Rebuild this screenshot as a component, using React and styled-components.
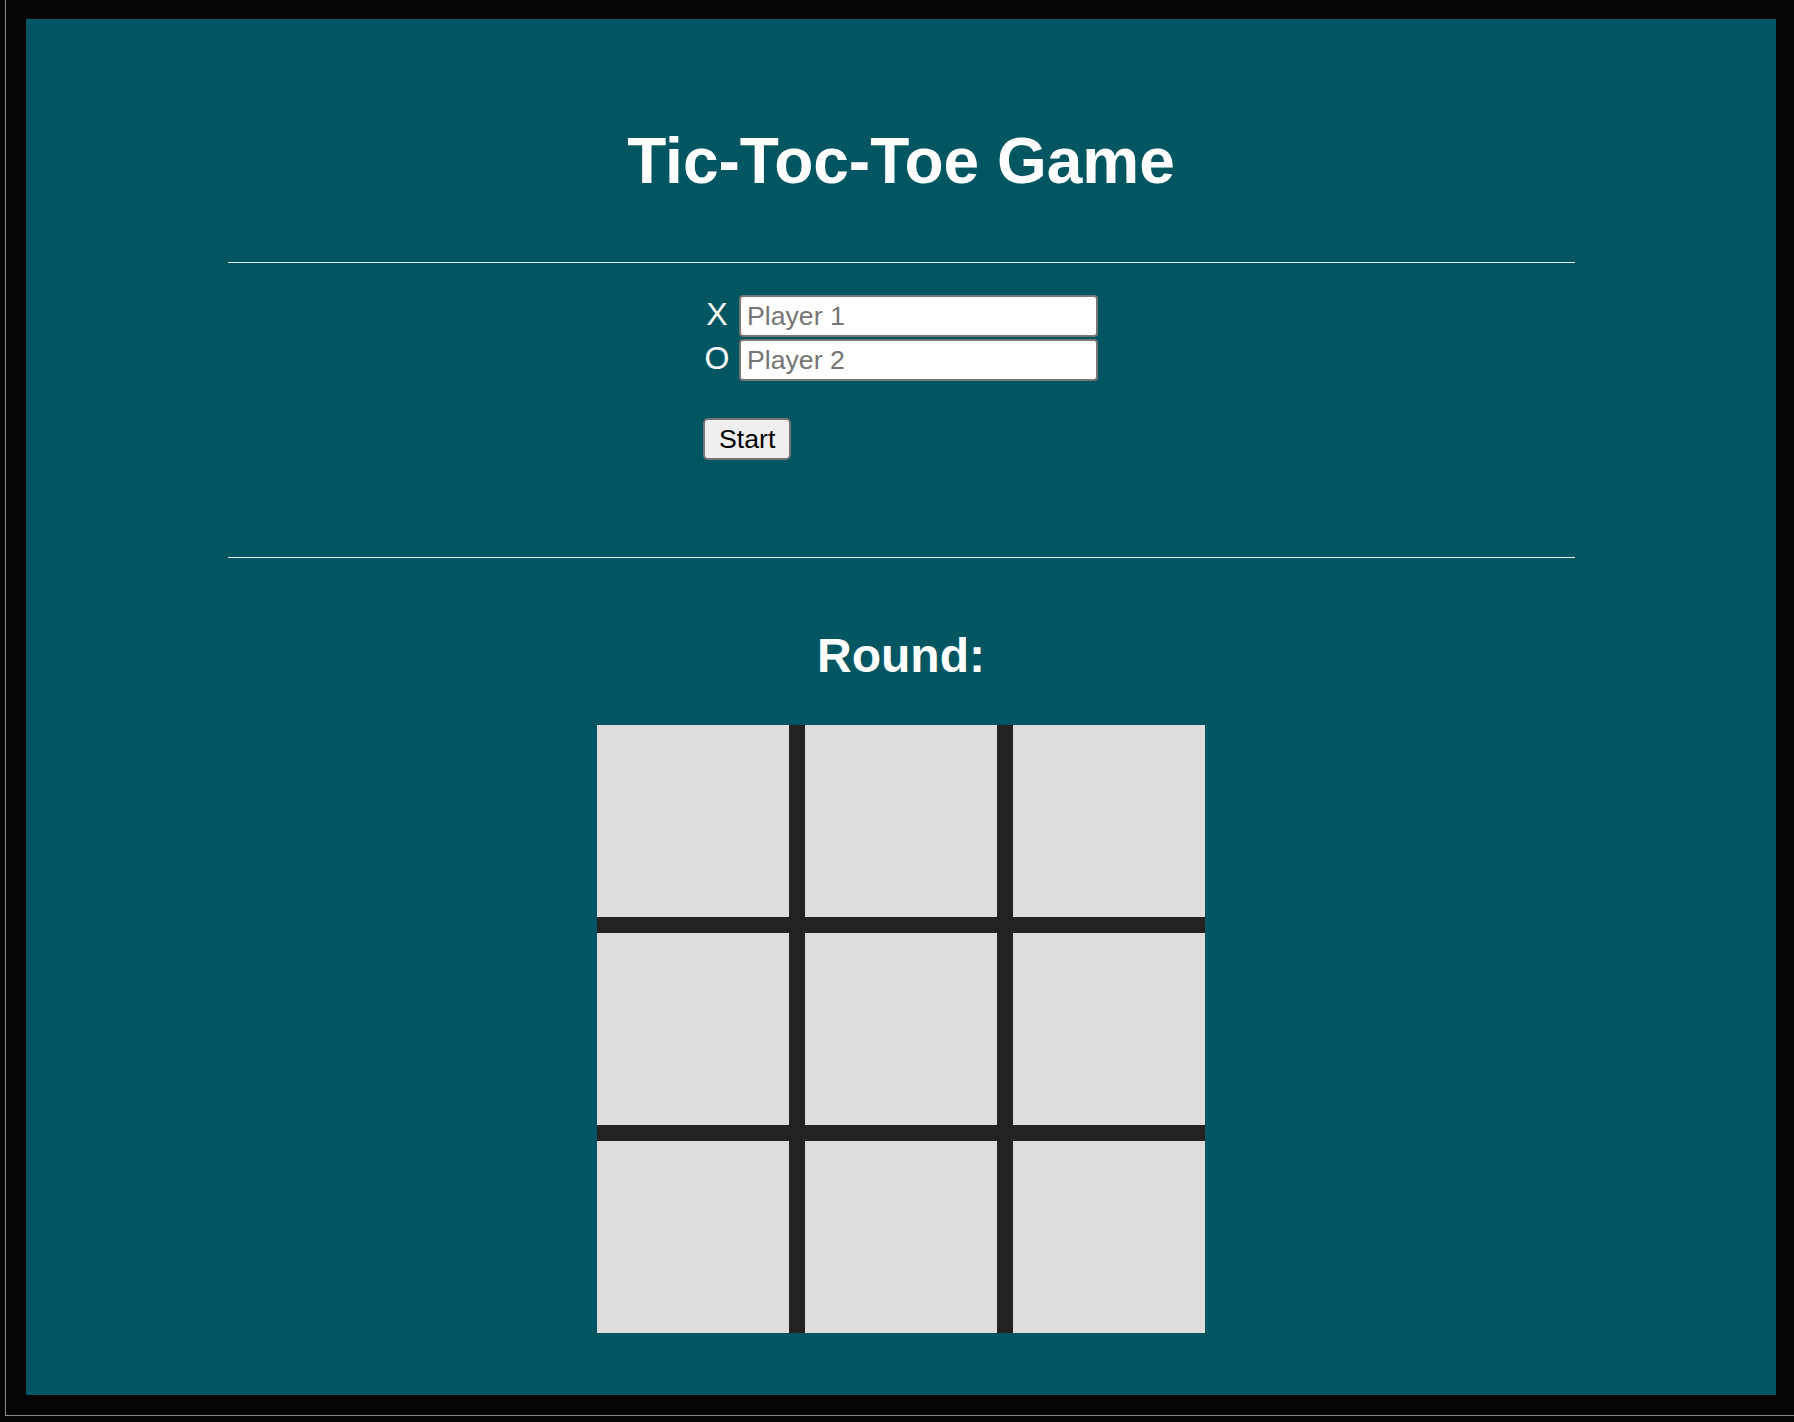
import React from 'react';
import styled, { createGlobalStyle } from 'styled-components';

const GlobalStyle = createGlobalStyle`
  html, body {
    margin: 0;
    padding: 0;
    background: #050505;
  }
  body {
    font-family: "Liberation Sans", Arial, sans-serif;
  }
`;

const Screen = styled.div`
  width: 1794px;
  height: 1422px;
  background: #050505;
  overflow: hidden;
`;

const Frame = styled.div`
  box-sizing: border-box;
  margin-left: 5px;
  width: 1789px;
  height: 1416px;
  padding: 19px 0 0 20px;
  border-left: 1px solid #8a8a8a;
  border-bottom: 1px solid #8a8a8a;
`;

const Panel = styled.div`
  box-sizing: border-box;
  width: 1750px;
  height: 1376px;
  padding-top: 106px;
  background: #015662;
  display: flex;
  flex-direction: column;
  align-items: center;
`;

const Title = styled.h1`
  margin: 0;
  font-size: 64px;
  line-height: 72px;
  font-weight: bold;
  color: #ffffff;
`;

const Rule = styled.hr`
  width: 1347px;
  height: 0;
  margin: ${(p) => p.$top}px 0 0;
  border: 0;
  border-top: 1px solid #e8f4f4;
`;

const Form = styled.div`
  width: 396px;
  margin-top: 32px;
  display: flex;
  flex-direction: column;
  gap: 2px;
`;

const Row = styled.div`
  display: flex;
  align-items: center;
  height: 42px;
`;

const Mark = styled.label`
  width: 28px;
  margin: 0 8px 4px 0;
  text-align: center;
  font-size: 32px;
  color: #ffffff;
`;

const NameInput = styled.input`
  box-sizing: border-box;
  width: 359px;
  height: 42px;
  padding: 2px 6px;
  border: 2px solid #767676;
  border-radius: 4px;
  background: #ffffff;
  font-family: "Liberation Sans", Arial, sans-serif;
  font-size: 26.67px;
  color: #000;
  &::placeholder {
    color: #757575;
  }
`;

const Button = styled.button`
  align-self: flex-start;
  box-sizing: border-box;
  height: 42px;
  margin-top: 35px;
  padding: 0 14px;
  border: 2px solid #767676;
  border-radius: 5px;
  background: #efefef;
  font-family: "Liberation Sans", Arial, sans-serif;
  font-size: 26.67px;
  color: #000;
`;

const Round = styled.h2`
  margin: 70px 0 0;
  font-size: 48px;
  line-height: 56px;
  font-weight: bold;
  color: #ffffff;
`;

const Board = styled.div`
  margin-top: 41px;
  display: grid;
  grid-template-columns: repeat(3, 192px);
  grid-auto-rows: 192px;
  gap: 16px;
  background: #222222;
`;

const Cell = styled.div`
  background: #dddddd;
`;

const App = () => (
  <Screen>
    <GlobalStyle />
    <Frame>
      <Panel>
        <Title>Tic-Toc-Toe Game</Title>
        <Rule $top={65} />
        <Form>
          <Row>
            <Mark>X</Mark>
            <NameInput placeholder="Player 1" />
          </Row>
          <Row>
            <Mark>O</Mark>
            <NameInput placeholder="Player 2" />
          </Row>
          <Button>Start</Button>
        </Form>
        <Rule $top={97} />
        <Round>Round:</Round>
        <Board>
          {Array.from({ length: 9 }, (_, i) => (
            <Cell key={i} />
          ))}
        </Board>
      </Panel>
    </Frame>
  </Screen>
);

export default App;
